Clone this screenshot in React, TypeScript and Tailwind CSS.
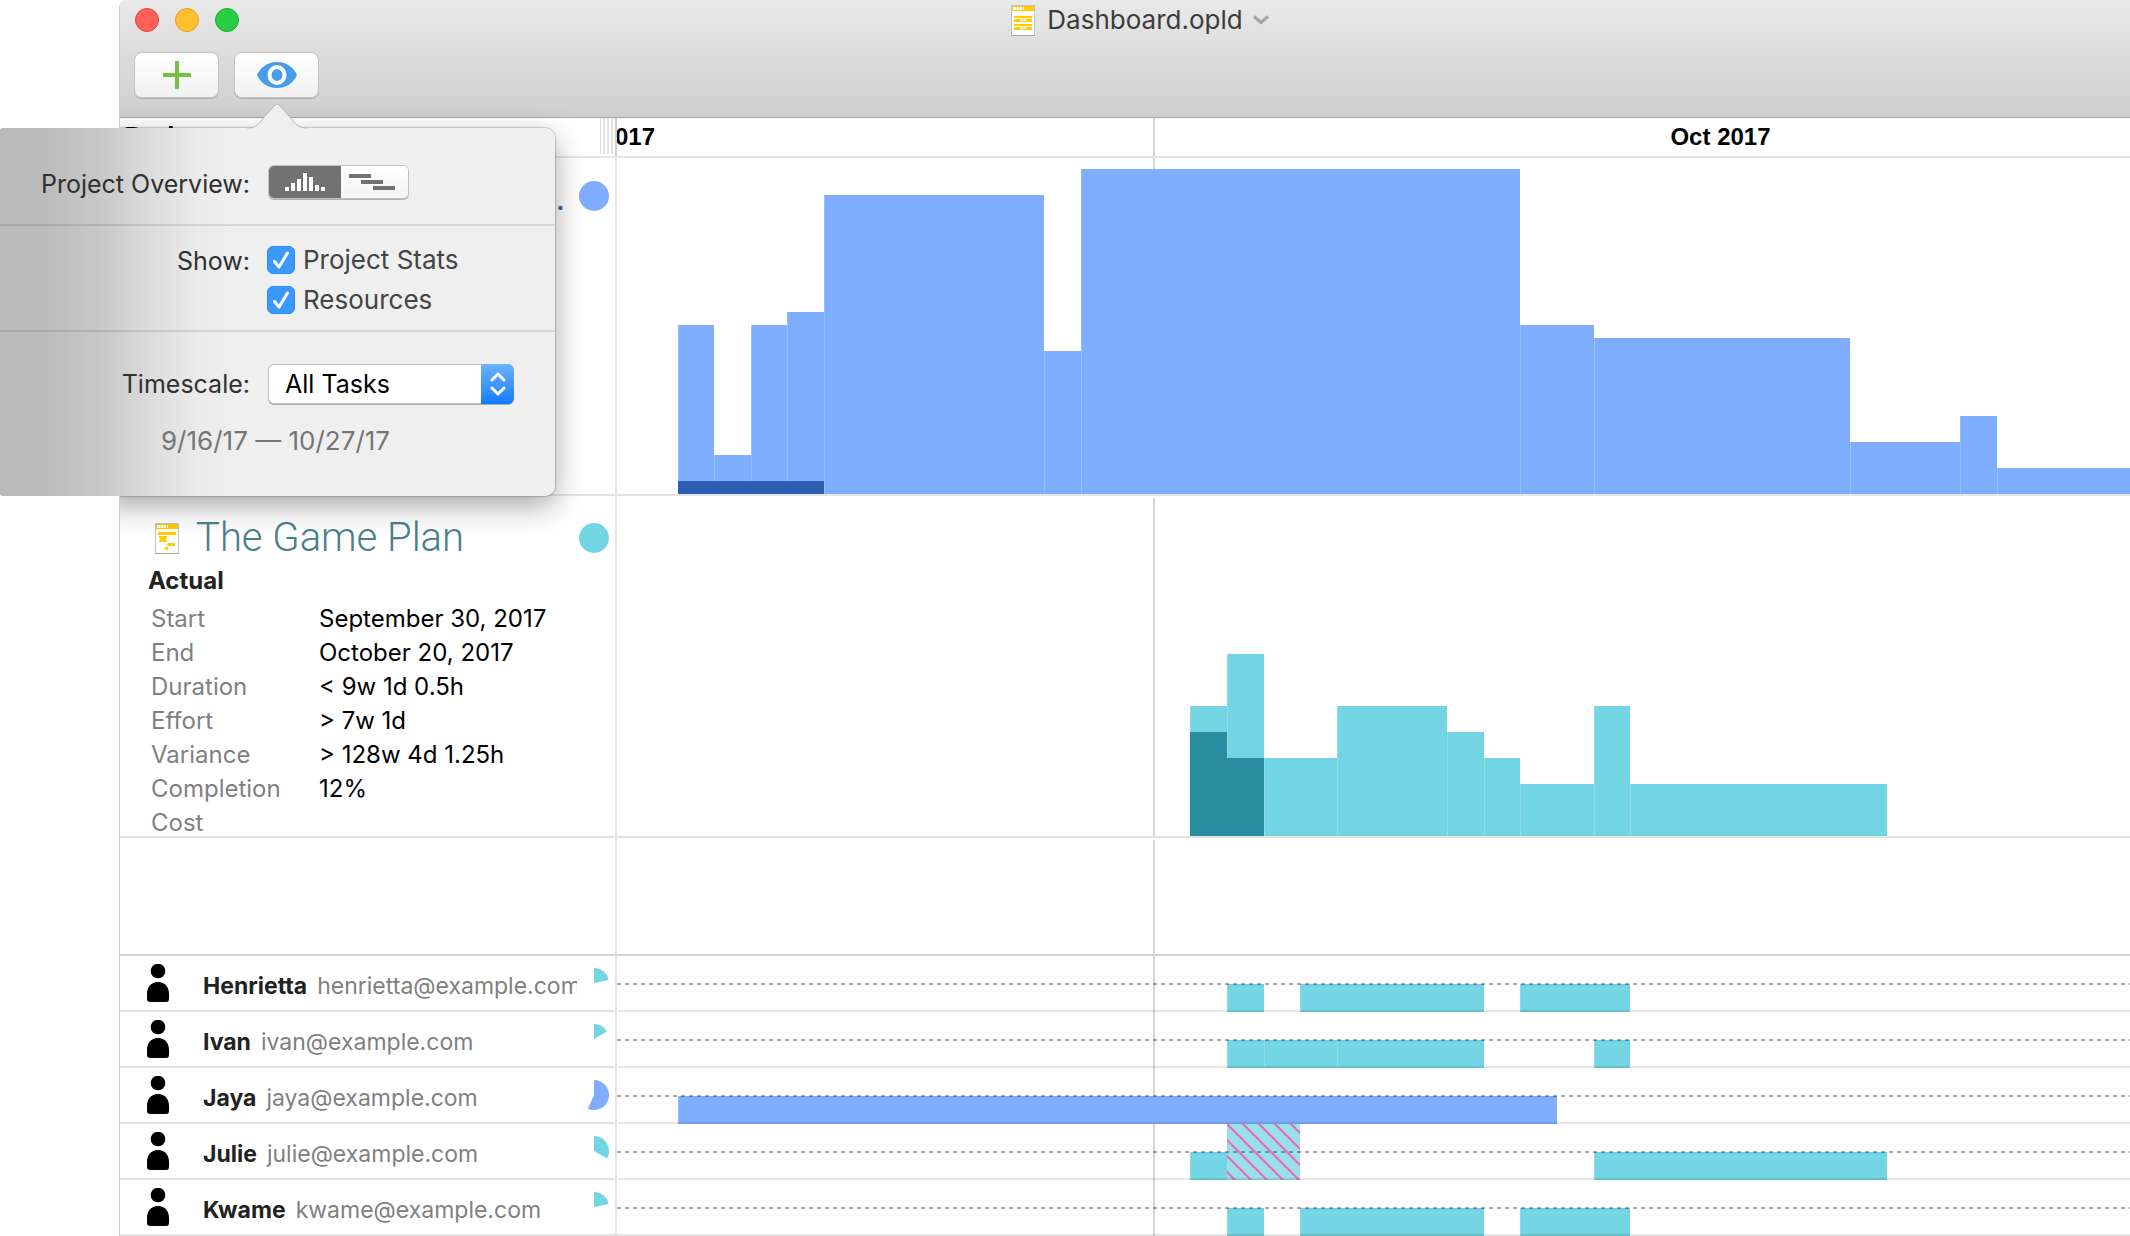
import { useState } from "react";

// Timeline geometry: day 0 is September 18
const DAY_WIDTH = 36.64;
const DAY_ZERO = 61;
const MONTH_DAY = 13;

const dayX = (day: number) => Math.floor(DAY_ZERO + day * DAY_WIDTH);

type Bar = { from: number; to: number; level: number; done?: number };

const dashboardBars: Bar[] = [
  { from: 0, to: 1, level: 13, done: 1 },
  { from: 1, to: 2, level: 3, done: 1 },
  { from: 2, to: 3, level: 13, done: 1 },
  { from: 3, to: 4, level: 14, done: 1 },
  { from: 4, to: 10, level: 23 },
  { from: 10, to: 11, level: 11 },
  { from: 11, to: 23, level: 25 },
  { from: 23, to: 25, level: 13 },
  { from: 25, to: 32, level: 12 },
  { from: 32, to: 35, level: 4 },
  { from: 35, to: 36, level: 6 },
  { from: 36, to: 60, level: 2 },
];

const gamePlanBars: Bar[] = [
  { from: 14, to: 15, level: 5, done: 4 },
  { from: 15, to: 16, level: 7, done: 3 },
  { from: 16, to: 18, level: 3 },
  { from: 18, to: 21, level: 5 },
  { from: 21, to: 22, level: 4 },
  { from: 22, to: 23, level: 3 },
  { from: 23, to: 25, level: 2 },
  { from: 25, to: 26, level: 5 },
  { from: 26, to: 33, level: 2 },
];

const stats = [
  { label: "Start", value: "September 30, 2017" },
  { label: "End", value: "October 20, 2017" },
  { label: "Duration", value: "< 9w 1d 0.5h" },
  { label: "Effort", value: "> 7w 1d" },
  { label: "Variance", value: "> 128w 4d 1.25h" },
  { label: "Completion", value: "12%" },
  { label: "Cost", value: "" },
];

type Resource = {
  name: string;
  email: string;
  angle: number;
  color: string;
  spans: [number, number][];
  overload?: [number, number];
};

const TEAL = "#73d5e4";
const BLUE = "#7fadff";

const resources: Resource[] = [
  { name: "Henrietta", email: "henrietta@example.com", angle: 78, color: TEAL, spans: [[15, 16], [17, 22], [23, 26]] },
  { name: "Ivan", email: "ivan@example.com", angle: 60, color: TEAL, spans: [[15, 16], [16, 18], [18, 22], [25, 26]] },
  { name: "Jaya", email: "jaya@example.com", angle: 204, color: BLUE, spans: [[0, 24]] },
  { name: "Julie", email: "julie@example.com", angle: 120, color: TEAL, spans: [[14, 15], [25, 33]], overload: [15, 17] },
  { name: "Kwame", email: "kwame@example.com", angle: 78, color: TEAL, spans: [[15, 16], [17, 22], [23, 26]] },
];

const DocumentIcon = ({ kind }: { kind: "dashboard" | "plan" }) => (
  <svg width="24" height="31" viewBox="0 0 24 31" className="shrink-0">
    <rect x="0.5" y="0.5" width="23" height="30" fill="#fff" stroke="#c4c4c4" />
    <path d="M0 30.5h24" stroke="#a8a8a8" />
    <rect x="1" y="1" width="22" height="5" fill="#ffcc00" />
    <path d="M2 3.500h9M12 3.500h1" stroke="#fff" strokeWidth="3" strokeDasharray="3 0.500" />
    {kind === "dashboard" ? (
      <g fill="#ffcc00">
        <path d="M3 11h18v2H3zM3 14h6v2h6v-2h6v3H3z" />
        <path d="M10 14h4v1h-4z" />
        <path d="M3 19h18v2H3zM3 22h6v2h6v-2h6v3H3z" />
        <path d="M10 22h4v1h-4z" />
      </g>
    ) : (
      <g fill="#ffcc00">
        <path d="M3 9h18v3H3z" />
        <path d="M4 13h8v1l-1 2 1 2v1H4v-1l1-2-1-2z" />
        <path d="M13 20h7v3h-7l-1-1z" />
        <path d="M11.500 23l2 2.500-2 2.500-2-2.500z" />
      </g>
    )}
  </svg>
);

const PersonIcon = () => (
  <svg width="22" height="38" viewBox="0 0 22 38" className="shrink-0">
    <circle cx="11" cy="7" r="7.300" />
    <path d="M11 18c7 0 11 5 11 12v5c0 2-1 3-3 3H3c-2 0-3-1-3-3v-5c0-7 4-12 11-12z" />
  </svg>
);

const Pie = ({ angle, color }: { angle: number; color: string }) => {
  const rad = (angle * Math.PI) / 180;
  const x = 15 + 15 * Math.sin(rad);
  const y = 15 - 15 * Math.cos(rad);
  return (
    <svg width="30" height="30" viewBox="0 0 30 30" className="shrink-0">
      <path d={`M15 15V0A15 15 0 ${angle > 180 ? 1 : 0} 1 ${x} ${y}Z`} fill={color} />
    </svg>
  );
};

const Histogram = ({
  bars,
  base,
  unit,
  color,
  doneColor,
  lineFrom,
}: {
  bars: Bar[];
  base: number;
  unit: number;
  color: string;
  doneColor: string;
  lineFrom: number;
}) => (
  <svg className="block h-full w-full" shapeRendering="crispEdges">
    <rect x={dayX(MONTH_DAY) - 1} y={lineFrom} width="2" height="400" fill="#d6d6d6" />
    {bars.map((bar) => {
      const x = dayX(bar.from);
      const width = dayX(bar.to) - x;
      const done = (bar.done ?? 0) * unit;
      return (
        <g key={bar.from}>
          <rect x={x} y={base - bar.level * unit} width={width} height={bar.level * unit} fill={color} />
          <rect x={x} y={base - bar.level * unit} width="1" height={bar.level * unit} fill="#fff" fillOpacity="0.2" />
          {done > 0 && <rect x={x} y={base - done} width={width} height={done} fill={doneColor} />}
        </g>
      );
    })}
  </svg>
);

const ResourceTrack = ({ resource }: { resource: Resource }) => (
  <svg className="block h-full w-full" shapeRendering="crispEdges">
    <defs>
      <pattern id="overload" width="16" height="16" patternUnits="userSpaceOnUse" x={dayX(15)}>
        <rect width="16" height="16" fill="#9bdfea" />
        <path d="M-1 -1l18 18M-1 15l2 2M15 -1l2 2" stroke="#ea66be" strokeWidth="2" shapeRendering="auto" />
      </pattern>
    </defs>
    <rect x={dayX(MONTH_DAY) - 1} width="2" height="56" fill="#d6d6d6" />
    {resource.spans.map(([from, to]) => (
      <g key={from}>
        <rect x={dayX(from)} y="28" width={dayX(to) - dayX(from)} height="28" fill={resource.color} />
        <rect x={dayX(from)} y="28" width="1" height="28" fill="#fff" fillOpacity="0.2" />
      </g>
    ))}
    {resource.overload && (
      <rect
        x={dayX(resource.overload[0])}
        width={dayX(resource.overload[1]) - dayX(resource.overload[0])}
        height="56"
        fill="url(#overload)"
      />
    )}
    <line x1="0" x2="100%" y1="28" y2="28" stroke="#000" strokeOpacity="0.35" strokeWidth="2" strokeDasharray="4 4" />
    <rect y="54" width="100%" height="2" fillOpacity="0.1" />
  </svg>
);

const CheckOption = ({
  label,
  checked,
  onChange,
}: {
  label: string;
  checked: boolean;
  onChange: (value: boolean) => void;
}) => (
  <label className="flex h-7 items-center gap-2 text-[26px] text-[#444]">
    <span className="relative h-7 w-7">
      <input
        type="checkbox"
        checked={checked}
        onChange={(e) => onChange(e.target.checked)}
        className="peer block h-7 w-7 appearance-none rounded-md border border-[#b5b5b5] bg-white checked:border-[#2f8cf5] checked:bg-[#3c99fc]"
      />
      <svg
        viewBox="0 0 28 28"
        className="pointer-events-none absolute inset-0 hidden h-7 w-7 peer-checked:block"
        fill="none"
        stroke="#fff"
        strokeWidth="3"
        strokeLinecap="round"
        strokeLinejoin="round"
      >
        <path d="M7.500 15.500l4.500 5.500 8.500-14" />
      </svg>
    </span>
    {label}
  </label>
);

const ViewPopover = () => {
  const [overview, setOverview] = useState("histogram");
  const [showStats, setShowStats] = useState(true);
  const [showResources, setShowResources] = useState(true);

  return (
    <section
      aria-label="View options"
      className="absolute top-[128px] left-0 z-20 w-[555px] rounded-l-[3px] rounded-r-[10px] bg-[linear-gradient(90deg,#bababa_0px,#bdbdbd_50px,#c9c9c9_105px,#dedede_155px,#ebebeb_200px,#efefef_240px)] text-[25px] leading-8 text-[#303030]"
    >
      <svg width="60" height="26" viewBox="0 0 60 26" className="absolute -top-[25px] left-[247px]">
        <path
          d="M0 25C11 25 13 19 18 13L27 3C29 0.500 31 0.500 33 3L42 13C47 19 49 25 60 25V26H0Z"
          fill="#efefef"
        />
        <path
          d="M0 25C11 25 13 19 18 13L27 3C29 0.500 31 0.500 33 3L42 13C47 19 49 25 60 25"
          fill="none"
          stroke="#b4b4b4"
        />
      </svg>

      <div className="flex h-24 gap-[18px] pt-[37px]">
        <span className="w-[250px] pt-[3px] text-right">Project Overview:</span>
        <div className="flex h-[34px] w-[141px] overflow-hidden rounded-md border border-[#c2c2c2] bg-white shadow-[0_1px_0_#b0b0b0]">
          <button
            aria-label="Histogram"
            aria-pressed={overview === "histogram"}
            onClick={() => setOverview("histogram")}
            className="flex w-[72px] items-center justify-center bg-[#727272]"
          >
            <svg width="40" height="18" viewBox="0 0 40 18" fill="#fff" shapeRendering="crispEdges">
              <path d="M0 14h4v4H0zM6 10h4v8H6zM12 6h4v12h-4zM18 0h4v18h-4zM24 4h4v14h-4zM30 12h4v6h-4zM36 14h4v4h-4z" />
            </svg>
          </button>
          <button
            aria-label="Gantt"
            aria-pressed={overview === "gantt"}
            onClick={() => setOverview("gantt")}
            className="flex flex-1 items-center bg-gradient-to-b from-white to-[#f4f4f4] pl-2"
          >
            <svg width="46" height="16" viewBox="0 0 46 16" fill="#727272" shapeRendering="crispEdges">
              <path d="M0 0h22v4H0zM12 6h22v4H12zM24 12h22v4H24z" />
            </svg>
          </button>
        </div>
      </div>

      <div className="flex h-[106px] gap-[17px] border-t-2 border-black/10 pt-5">
        <span className="w-[250px] text-right leading-[30px]">Show:</span>
        <div className="flex flex-col gap-3">
          <CheckOption label="Project Stats" checked={showStats} onChange={setShowStats} />
          <CheckOption label="Resources" checked={showResources} onChange={setShowResources} />
        </div>
      </div>

      <div className="h-[166px] border-t-2 border-black/10 pt-8">
        <div className="flex items-center gap-[18px]">
          <label htmlFor="timescale" className="w-[250px] text-right">
            Timescale:
          </label>
          <div className="relative">
            <select
              id="timescale"
              className="block h-10 w-[246px] appearance-none rounded-md border border-[#c2c2c2] bg-white pl-4 text-black shadow-[0_1px_0_#aaa]"
            >
              <option>All Tasks</option>
            </select>
            <span className="pointer-events-none absolute top-0 right-0 flex h-10 w-[33px] items-center justify-center rounded-r-md bg-gradient-to-b from-[#6ab3fb] to-[#0a7aff]">
              <svg width="16" height="24" viewBox="0 0 16 24" fill="none" stroke="#fff" strokeWidth="3" strokeLinecap="round" strokeLinejoin="round">
                <path d="M2 8l6-6 6 6M2 16l6 6 6-6" />
              </svg>
            </span>
          </div>
        </div>
        <p className="mt-[21px] pl-[161px] text-[26px] text-[#757575]">9/16/17 — 10/27/17</p>
      </div>
    </section>
  );
};

const Toolbar = () => (
  <header className="h-[118px] border-b border-[#a6a6a6] bg-gradient-to-b from-[#e9e9e9] to-[#cecece] pl-[14px]">
    <div className="grid h-10 grid-cols-[1fr_auto_1fr] items-center">
      <div className="flex gap-4 pl-px">
        <button aria-label="Close" className="h-6 w-6 rounded-full border border-[#e0443e] bg-[#ff6059]" />
        <button aria-label="Minimize" className="h-6 w-6 rounded-full border border-[#dea123] bg-[#ffc02f]" />
        <button aria-label="Zoom" className="h-6 w-6 rounded-full border border-[#1aab29] bg-[#29ce42]" />
      </div>
      <div className="ml-4 flex items-center">
        <DocumentIcon kind="dashboard" />
        <h1 className="ml-3 text-[26px] leading-8 text-[#3c3c3c]">Dashboard.opld</h1>
        <svg width="16" height="10" viewBox="0 0 16 10" fill="none" stroke="#a3a3a3" strokeWidth="3" className="ml-[10px]">
          <path d="M1 1.500l7 6 7-6" />
        </svg>
      </div>
    </div>
    <div className="flex gap-[15px] pt-3">
      <button
        aria-label="Add"
        className="flex h-[46px] w-[85px] items-center justify-center rounded-lg border border-[#c4c4c4] bg-gradient-to-b from-white to-[#f1f1f1] shadow-[0_1px_0_#adadad]"
      >
        <svg width="28" height="28" viewBox="0 0 28 28" stroke="#76c143" strokeWidth="4">
          <path d="M14 0v28M0 14h28" />
        </svg>
      </button>
      <button
        aria-label="View"
        className="flex h-[46px] w-[85px] items-center justify-center rounded-lg border border-[#c4c4c4] bg-gradient-to-b from-white to-[#f1f1f1] shadow-[0_1px_0_#adadad]"
      >
        <svg width="40" height="26" viewBox="0 0 40 26">
          <path d="M20 0C30 0 37 6 40 13 37 20 30 26 20 26S3 20 0 13C3 6 10 0 20 0z" fill="#459eec" />
          <ellipse cx="20" cy="13" rx="7.500" ry="8" fill="#459eec" stroke="#fff" strokeWidth="4" />
        </svg>
      </button>
    </div>
  </header>
);

const App = () => (
  <div className="relative overflow-hidden bg-white pl-[119px] font-[Inter,'Liberation_Sans',sans-serif]">
    <ViewPopover />

    <main className="relative overflow-hidden rounded-tl-lg border-l border-[#cfcfcf]">
      {/* Popover shadow, kept inside the window */}
      <div className="pointer-events-none absolute top-32 -left-5 z-10 h-[368px] w-[455px] rounded-[10px] shadow-[0_0_2px_rgba(0,0,0,0.6),0_10px_30px_rgba(0,0,0,0.35)]" />

      <Toolbar />

      <div className="flex h-10 border-b-2 border-[#e4e4e4] font-['Liberation_Sans',Arial,sans-serif] text-2xl leading-[38px] font-bold">
        <div className="flex w-[497px] shrink-0 justify-between border-r-2 border-[#cfcfcf]">
          <span className="pl-1 text-[26px] leading-9">Projects</span>
          <span className="flex h-9 gap-[2px] border-l border-[#dcdcdc] pr-[2px] pl-[2px]">
            <i className="w-[2px] bg-[#e2e2e2]" />
            <i className="w-[2px] bg-[#e2e2e2]" />
            <i className="w-[2px] bg-[#e2e2e2]" />
          </span>
        </div>
        <div className="flex flex-1 overflow-hidden text-center">
          <div className="-ml-[564px] w-[1102px] shrink-0 border-r-2 border-[#d6d6d6]">Sep 2017</div>
          <div className="w-[1131px] shrink-0">Oct 2017</div>
        </div>
      </div>

      <div className="flex h-[338px] border-b-2 border-[#e4e4e4]">
        <div className="flex w-[497px] shrink-0 items-start justify-end gap-[14px] border-r-2 border-[#e4e4e4] pt-[23px] pr-[6px]">
          <span className="pt-[2px] text-[32px] leading-8 text-[#3b66a8]">.</span>
          <span className="h-[30px] w-[30px] rounded-full bg-[#7fadff]" />
        </div>
        <div className="min-w-0 flex-1">
          <Histogram bars={dashboardBars} base={336} unit={13} color={BLUE} doneColor="#2b5db1" lineFrom={0} />
        </div>
      </div>

      <div className="flex h-[342px] border-b-2 border-[#e4e4e4]">
        <div className="w-[497px] shrink-0 border-r-2 border-[#e4e4e4] pt-[22px]">
          <div className="flex items-center pr-[6px] pl-[35px]">
            <DocumentIcon kind="plan" />
            <h2 className="ml-[17px] flex-1 font-[Roboto,sans-serif] text-[40px] leading-[40px] font-light text-[#47808b]">
              The Game Plan
            </h2>
            <span className="h-[30px] w-[30px] rounded-full bg-[#73d5e4]" />
          </div>
          <h3 className="pt-[3px] pb-px pl-7 text-2xl leading-10 font-bold text-[#222]">Actual</h3>
          <table className="ml-[31px] text-left text-2xl leading-[34px]">
            <tbody>
              {stats.map((row) => (
                <tr key={row.label} className="h-[34px]">
                  <th className="w-[168px] p-0 font-normal text-[#808080]">{row.label}</th>
                  <td className="p-0 whitespace-nowrap text-black">{row.value}</td>
                </tr>
              ))}
            </tbody>
          </table>
        </div>
        <div className="min-w-0 flex-1">
          <Histogram bars={gamePlanBars} base={340} unit={26} color={TEAL} doneColor="#288da0" lineFrom={2} />
        </div>
      </div>

      <div className="flex h-[118px] border-b-2 border-[#d3d3d3]">
        <div className="w-[497px] shrink-0 border-r-2 border-[#e4e4e4]" />
        <div className="min-w-0 flex-1">
          <Histogram bars={[]} base={116} unit={1} color={TEAL} doneColor={TEAL} lineFrom={2} />
        </div>
      </div>

      <ul>
        {resources.map((resource) => (
          <li key={resource.name} className="flex h-14">
            <div className="flex w-[497px] shrink-0 items-center border-r-2 border-b-2 border-[#e4e4e4] pr-[6px] pl-[27px]">
              <PersonIcon />
              <div className="mr-[2px] ml-[34px] flex flex-1 items-baseline gap-[10px] overflow-hidden pt-[6px] text-[23px] leading-8 whitespace-nowrap">
                <span className="font-bold text-[#222]">{resource.name}</span>
                <span className="text-[#808080]">{resource.email}</span>
              </div>
              <Pie angle={resource.angle} color={resource.color} />
            </div>
            <div className="min-w-0 flex-1">
              <ResourceTrack resource={resource} />
            </div>
          </li>
        ))}
      </ul>
    </main>
  </div>
);

export default App;
